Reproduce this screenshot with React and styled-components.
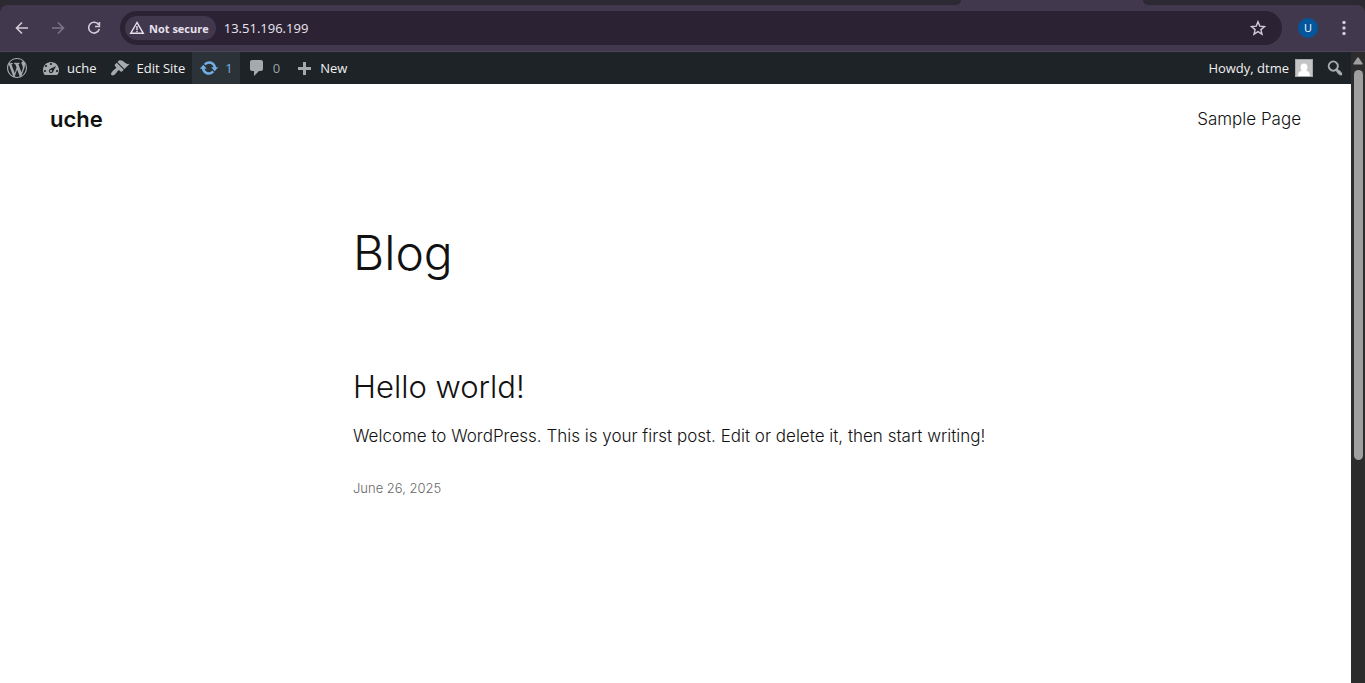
import React from "react";
import styled, { createGlobalStyle } from "styled-components";

const GlobalStyle = createGlobalStyle`
  *, *::before, *::after { box-sizing: border-box; }
  body { margin: 0; background: #fff; }
  button { padding: 0; border: 0; background: none; font: inherit; color: inherit; cursor: pointer; }
  a { color: inherit; text-decoration: none; }
  h1, h2, p { margin: 0; }
  svg { display: block; flex: none; }
`;

const Browser = styled.div`
  display: flex;
  flex-direction: column;
  min-height: 100vh;
`;

const TabStrip = styled.div`
  display: flex;
  height: 5px;
  background: #41384d;
`;

const InactiveTabs = styled.div`
  flex: ${({ $grow }) => $grow} 0 0;
  background: #2d2933;
  border-radius: ${({ $side }) => ($side === "left" ? "0 0 8px 0" : "0 0 0 8px")};
`;

const ActiveTab = styled.div`
  flex: 182 0 0;
`;

const ToolbarBacking = styled.div`
  background: #2d2933;
`;

const Toolbar = styled.div`
  display: flex;
  align-items: center;
  height: 47px;
  padding: 0 13px 0 14px;
  background: #41384d;
  border-bottom: 1px solid #4b4555;
  border-radius: 8px 8px 0 0;
  color: #dcd5e2;
`;

const NavButtons = styled.div`
  display: flex;
  gap: 20px;
  margin-right: 18px;
`;

const IconButton = styled.button`
  display: grid;
  place-items: center;
  width: 16px;
  height: 16px;
  color: ${({ $dim }) => ($dim ? "#7d7588" : "#d2cad9")};
`;

const AddressBar = styled.form`
  display: flex;
  flex: 1;
  align-items: center;
  min-width: 0;
  height: 34px;
  padding: 0 16px 0 5px;
  border-radius: 17px;
  background: #2b2334;
`;

const SecurityChip = styled.button`
  display: flex;
  align-items: center;
  gap: 4px;
  height: 24px;
  padding: 0 7px 0 4px;
  border-radius: 12px;
  background: #41384d;
  color: #e6e0ec;
  font: 700 11px "Open Sans", "Noto Sans", sans-serif;
  white-space: nowrap;
`;

const AddressInput = styled.input`
  flex: 1;
  min-width: 0;
  padding: 0;
  margin-left: 8px;
  border: 0;
  outline: 0;
  background: none;
  color: #ece6f1;
  font: 13px "Open Sans", "Noto Sans", sans-serif;
`;

const Profile = styled.button`
  width: 20px;
  height: 20px;
  margin: 0 18px 0 16px;
  border-radius: 50%;
  background: #04569c;
  color: #fff;
  font: 11px/20px "Open Sans", sans-serif;
`;

const Viewport = styled.div`
  display: flex;
  flex: 1;
`;

const Page = styled.div`
  flex: 1;
  min-width: 0;
  background: #fff;
  color: #111;
  font-family: Inter, sans-serif;
  font-weight: 300;
`;

const AdminBar = styled.nav`
  display: flex;
  height: 32px;
  background: #1d2327;
  color: #f0f0f1;
  font: 13px/32px "Open Sans", "Noto Sans", sans-serif;
`;

const AdminItem = styled.a`
  display: flex;
  align-items: center;
  gap: 6px;
  padding: 0 7px;
  white-space: nowrap;
  background: ${({ $active }) => ($active ? "#2c3338" : "none")};
  color: ${({ $active, $muted }) => ($active ? "#72aee6" : $muted ? "#9ca2a7" : "#f0f0f1")};
  svg { color: ${({ $active }) => ($active ? "#72aee6" : "#a7aaad")}; }
`;

const AdminEnd = styled.div`
  display: flex;
  margin-left: auto;

  a { padding: 0 6px; }
`;

const SiteHeader = styled.header`
  display: flex;
  align-items: center;
  justify-content: space-between;
  padding: 20px 50px;
  line-height: 30px;
`;

const SiteTitle = styled.a`
  font-size: 22px;
  font-weight: 600;
`;

const NavLink = styled.a`
  font-size: 17px;
`;

const Main = styled.main`
  width: 100%;
  max-width: 645px;
  margin: 0 auto;
  padding: 71px 0;
`;

const PageTitle = styled.h1`
  font-size: 48px;
  line-height: 56px;
  font-weight: 300;
`;

const Post = styled.article`
  padding-top: 88px;
`;

const PostTitle = styled.h2`
  font-size: 31px;
  line-height: 36px;
  font-weight: 300;
`;

const Excerpt = styled.p`
  padding-top: 17px;
  font-size: 17px;
  line-height: 28px;
`;

const PostDate = styled.a`
  display: block;
  padding-top: 28px;
  color: #686868;
  font-size: 13px;
  line-height: 20px;
`;

const ScrollTrack = styled.div`
  display: flex;
  flex-direction: column;
  align-items: center;
  width: 14px;
  padding: 5px 0 16px;
  background: #2c2c2c;
`;

const ScrollThumb = styled.div`
  width: 9px;
  height: 64%;
  margin-top: 5px;
  border-radius: 5px;
  background: #9f9f9f;
`;

const DASHICONS = {
  wordpress:
    "M20 10c0-5.51-4.49-10-10-10C4.48 0 0 4.49 0 10c0 5.52 4.48 10 10 10 5.51 0 10-4.48 10-10zM7.78 15.37L4.37 6.22c.55-.02 1.17-.08 1.17-.08.5-.06.44-1.13-.06-1.11 0 0-1.45.11-2.37.11-.18 0-.37 0-.58-.01C4.12 2.69 6.87 1.11 10 1.11c2.33 0 4.45.87 6.05 2.34-.68-.11-1.65.39-1.65 1.58 0 .74.45 1.36.9 2.1.35.61.55 1.36.55 2.46 0 1.49-1.4 5-1.4 5l-3.03-8.37c.54-.02.82-.17.82-.17.5-.05.44-1.25-.06-1.22 0 0-1.44.12-2.38.12-.87 0-2.33-.12-2.33-.12-.5-.03-.56 1.2-.06 1.22l.92.08 1.26 3.41zM17.41 10c.24-.64.74-1.87.43-4.25.7 1.29 1.05 2.71 1.05 4.25 0 3.29-1.73 6.24-4.4 7.78.97-2.59 1.94-5.2 2.92-7.78zM6.1 18.09C3.12 16.65 1.11 13.53 1.11 10c0-1.3.23-2.48.72-3.59C3.25 10.3 4.67 14.2 6.1 18.09zm4.03-6.63l2.58 6.98c-.86.29-1.76.45-2.71.45-.79 0-1.57-.11-2.29-.33.81-2.38 1.62-4.74 2.42-7.1z",
  dashboard:
    "M3.76 17h12.48A7.934 7.934 0 0 0 18 12c0-4.42-3.58-8-8-8s-8 3.58-8 8c0 1.9.66 3.65 1.76 5zM9 6c0-.55.45-1 1-1s1 .45 1 1c0 .56-.45 1-1 1s-1-.44-1-1zM4 8c0-.55.45-1 1-1s1 .45 1 1-.45 1-1 1-1-.45-1-1zm4.52 3.4c.84-.83 6.51-3.5 6.51-3.5s-2.66 5.68-3.49 6.51c-.84.84-2.18.84-3.02 0-.83-.83-.83-2.18 0-3.01zM3 13c0-.55.45-1 1-1s1 .45 1 1c0 .56-.45 1-1 1s-1-.44-1-1zm6 0c0 .56.45 1 1 1s1-.44 1-1c0-.55-.45-1-1-1s-1 .45-1 1zm6 0c0-.55.45-1 1-1s1 .45 1 1c0 .56-.45 1-1 1s-1-.44-1-1z",
  brush:
    "M14.48 11.06L7.41 3.99l1.5-1.5c.5-.56 2.3-.47 3.51.32 1.21.8 1.43 1.28 2.91 2.1 1.18.64 2.45 1.26 4.45.85zm-.71.71L6.7 4.7 4.93 6.47c-.39.39-.39 1.02 0 1.41l1.06 1.06c.39.39.39 1.03 0 1.42-.6.6-1.43 1.11-2.21 1.69-.35.26-.7.53-1.01.84C1.43 14.23.4 16.08 1.4 17.07c.99 1 2.84-.03 4.18-1.36.31-.31.58-.66.85-1.02.57-.78 1.08-1.61 1.69-2.21.39-.39 1.02-.39 1.41 0l1.06 1.06c.39.39 1.02.39 1.41 0z",
  update:
    "M10.2 3.28c3.53 0 6.43 2.61 6.92 6h2.08l-3.5 4-3.5-4h2.32c-.45-1.97-2.21-3.45-4.32-3.45-1.45 0-2.73.71-3.54 1.78L4.95 5.66C6.23 4.2 8.11 3.28 10.2 3.28zm-.4 13.44c-3.52 0-6.43-2.61-6.92-6H.8l3.5-4c1.17 1.33 2.33 2.67 3.5 4H5.48c.45 1.97 2.21 3.45 4.32 3.45 1.45 0 2.73-.71 3.54-1.78l1.71 1.95c-1.28 1.46-3.15 2.38-5.25 2.38z",
  comments:
    "M5 2h9c1.1 0 2 .9 2 2v7c0 1.1-.9 2-2 2h-2l-5 5v-5H5c-1.1 0-2-.9-2-2V4c0-1.1.9-2 2-2z",
  plus: "M17 9v3h-5v5H9v-5H4V9h5V4h3v5h5z",
  search:
    "M12.14 4.18a5.504 5.504 0 0 1 .72 6.89c.12.1.22.21.36.31.2.16.47.36.81.59.34.24.56.39.66.47.42.31.73.57.94.78.32.32.6.65.84 1 .25.35.44.69.59 1.04.14.35.21.68.18 1-.02.32-.14.59-.36.81s-.49.34-.81.36c-.31.02-.65-.04-.99-.19-.35-.14-.7-.34-1.04-.59-.35-.24-.68-.52-1-.84-.21-.21-.47-.52-.77-.93-.1-.13-.25-.35-.47-.66-.22-.32-.4-.57-.56-.78-.16-.2-.29-.35-.44-.5a5.503 5.503 0 0 1-6.44-.98c-2.14-2.15-2.14-5.64 0-7.78a5.498 5.498 0 0 1 7.78 0zm-1.41 6.36a3.513 3.513 0 0 0 0-4.95 3.495 3.495 0 0 0-4.95 0 3.495 3.495 0 0 0 0 4.95 3.495 3.495 0 0 0 4.95 0z",
};

const Dashicon = ({ name }) => (
  <svg width="20" height="20" viewBox="0 0 20 20" fill="currentColor" aria-hidden="true">
    <path d={DASHICONS[name]} />
  </svg>
);

const ChromeIcon = ({ children, size = 16 }) => (
  <svg width={size} height={size} viewBox="0 0 16 16" fill="none" stroke="currentColor" strokeWidth="1.6" aria-hidden="true">
    {children}
  </svg>
);

const Avatar = () => (
  <svg width="18" height="18" viewBox="0 0 18 18" aria-hidden="true">
    <rect width="18" height="18" fill="#a5a8ab" />
    <rect x="1" y="1" width="16" height="16" fill="#c5c5c5" />
    <path d="M9 4.5c2.2 0 3.5 1.6 3.5 3.7 0 1.5-.6 2.7-1.5 3.4 2 .6 4 1.7 4 5.4H3c0-3.7 2-4.8 4-5.4-.9-.7-1.5-1.9-1.5-3.4 0-2.1 1.3-3.7 3.5-3.7z" fill="#fff" />
  </svg>
);

export default function App() {
  return (
    <>
      <GlobalStyle />
      <Browser>
        <TabStrip>
          <InactiveTabs $grow={961} $side="left" />
          <ActiveTab />
          <InactiveTabs $grow={222} $side="right" />
        </TabStrip>
        <ToolbarBacking>
          <Toolbar>
            <NavButtons>
              <IconButton type="button" aria-label="Back">
                <ChromeIcon><path d="M14 8H3M8 2.5 2.5 8 8 13.5" /></ChromeIcon>
              </IconButton>
              <IconButton type="button" aria-label="Forward" $dim>
                <ChromeIcon><path d="M2 8h11M8 2.5 13.5 8 8 13.5" /></ChromeIcon>
              </IconButton>
              <IconButton type="button" aria-label="Reload">
                <ChromeIcon><path d="M12.6 4.7A5.4 5.4 0 1 0 13.3 9M13.4 2v4.5H9" /></ChromeIcon>
              </IconButton>
            </NavButtons>
            <AddressBar onSubmit={(e) => e.preventDefault()}>
              <SecurityChip type="button">
                <ChromeIcon>
                  <path d="M8 2.5 1.7 13.3h12.6z" strokeWidth="1.4" />
                  <path d="M8 6v4M8 10.8v1.5" strokeWidth="1.4" />
                </ChromeIcon>
                Not secure
              </SecurityChip>
              <AddressInput aria-label="Address" defaultValue="13.51.196.199" />
              <IconButton type="button" aria-label="Bookmark this page">
                <ChromeIcon>
                  <path d="m8 1.7 1.8 4.4 4.7.4-3.6 3.1 1.1 4.6L8 11.7l-4 2.5 1.1-4.6-3.6-3.1 4.7-.4z" strokeWidth="1.4" />
                </ChromeIcon>
              </IconButton>
            </AddressBar>
            <Profile type="button">U</Profile>
            <IconButton type="button" aria-label="Menu">
              <svg width="16" height="16" viewBox="0 0 16 16" fill="currentColor" aria-hidden="true">
                <circle cx="8" cy="2.5" r="1.7" />
                <circle cx="8" cy="8" r="1.7" />
                <circle cx="8" cy="13.5" r="1.7" />
              </svg>
            </IconButton>
          </Toolbar>
        </ToolbarBacking>
        <Viewport>
          <Page>
            <AdminBar aria-label="Admin toolbar">
              <AdminItem href="#about" aria-label="About WordPress"><Dashicon name="wordpress" /></AdminItem>
              <AdminItem href="#site"><Dashicon name="dashboard" />uche</AdminItem>
              <AdminItem href="#edit"><Dashicon name="brush" />Edit Site</AdminItem>
              <AdminItem href="#updates" $active><Dashicon name="update" />1</AdminItem>
              <AdminItem href="#comments" $muted><Dashicon name="comments" />0</AdminItem>
              <AdminItem href="#new"><Dashicon name="plus" />New</AdminItem>
              <AdminEnd>
                <AdminItem href="#profile">Howdy, dtme<Avatar /></AdminItem>
                <AdminItem href="#search" aria-label="Search"><Dashicon name="search" /></AdminItem>
              </AdminEnd>
            </AdminBar>
            <SiteHeader>
              <SiteTitle href="#home">uche</SiteTitle>
              <NavLink href="#sample">Sample Page</NavLink>
            </SiteHeader>
            <Main>
              <PageTitle>Blog</PageTitle>
              <Post>
                <PostTitle><a href="#hello">Hello world!</a></PostTitle>
                <Excerpt>Welcome to WordPress. This is your first post. Edit or delete it, then start writing!</Excerpt>
                <PostDate href="#hello"><time dateTime="2025-06-26">June 26, 2025</time></PostDate>
              </Post>
            </Main>
          </Page>
          <ScrollTrack aria-hidden="true">
            <svg width="10" height="8" viewBox="0 0 10 8" fill="#9f9f9f">
              <path d="M4.2.8a1 1 0 0 1 1.6 0L9.6 6.6Q10 7.5 9 7.5H1Q0 7.5.4 6.6z" />
            </svg>
            <ScrollThumb />
          </ScrollTrack>
        </Viewport>
      </Browser>
    </>
  );
}
